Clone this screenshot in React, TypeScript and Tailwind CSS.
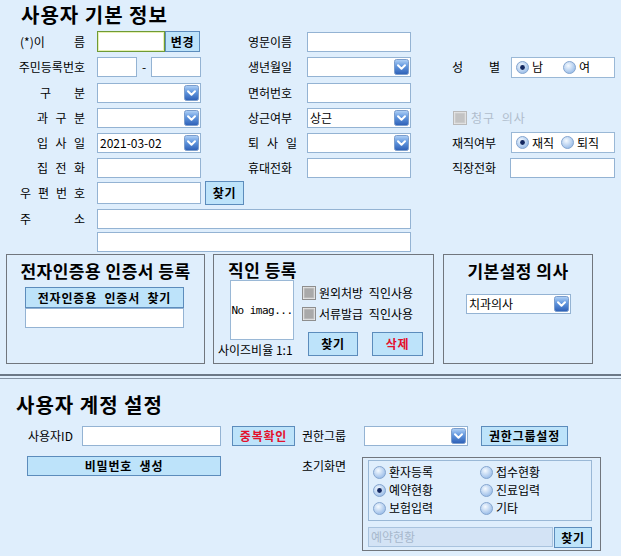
import React from 'react';

function DropIcon() {
  return (
    <svg width="15" height="16" viewBox="0 0 15 16" className="shrink-0">
      <defs>
        <linearGradient id="dropGrad" x1="0" y1="0" x2="0" y2="1">
          <stop offset="0" stopColor="#b3d3f7" />
          <stop offset="0.45" stopColor="#6196de" />
          <stop offset="1" stopColor="#2d5fb6" />
        </linearGradient>
      </defs>
      <rect x="0.5" y="0.5" width="14" height="15" rx="2" fill="url(#dropGrad)" stroke="#7b9dcc" />
      <path d="M4 6.2 L7.5 9.8 L11 6.2" fill="none" stroke="#fff" strokeWidth="2" strokeLinecap="round" strokeLinejoin="round" />
    </svg>
  );
}

function Radio({ checked }: { checked?: boolean }) {
  return (
    <svg width="13" height="13" viewBox="0 0 13 13" className="shrink-0">
      <defs>
        <radialGradient id="radioGrad" cx="0.4" cy="0.35" r="0.75">
          <stop offset="0" stopColor="#f5faff" />
          <stop offset="1" stopColor="#8db4e5" />
        </radialGradient>
      </defs>
      <circle cx="6.5" cy="6.5" r="6" fill="url(#radioGrad)" stroke="#86a6cf" />
      {checked && <circle cx="6.5" cy="6.5" r="2.4" fill="#13275f" />}
    </svg>
  );
}

function Check({ disabled }: { disabled?: boolean }) {
  return (
    <svg width="14" height="14" viewBox="0 0 14 14" className="shrink-0">
      <rect x="0.5" y="0.5" width="13" height="13" fill={disabled ? '#eeeeee' : '#f4f4f4'} stroke={disabled ? '#b9b9b9' : '#8e8e8e'} />
      <rect x="2" y="2" width="10" height="10" fill={disabled ? '#c3c3c3' : '#a9a9a9'} stroke={disabled ? '#d2d2d2' : '#c6c6c6'} strokeWidth="1" />
    </svg>
  );
}

function Input({ className = 'w-[104px]', value, disabled }: { className?: string; value?: string; disabled?: boolean }) {
  return (
    <div
      className={`h-[20px] border flex items-center pl-[2px] text-[12px] leading-none ${
        disabled ? 'border-[#a9c3de] bg-[#d3e3f5] text-[#a7b8cc]' : 'border-[#94b3d3] bg-white'
      } ${className}`}
    >
      {value}
    </div>
  );
}

function Select({ className = 'w-[104px]', value }: { className?: string; value?: string }) {
  return (
    <div className={`h-[20px] border border-[#94b3d3] bg-white flex items-center justify-between pl-[2px] pr-[1px] text-[12px] leading-none ${className}`}>
      <span>{value}</span>
      <DropIcon />
    </div>
  );
}

function Btn({ children, className = '', red }: { children: React.ReactNode; className?: string; red?: boolean }) {
  return (
    <div
      className={`border border-[#5c8cbc] bg-[#bde3fa] flex items-center justify-center text-[12px] font-bold leading-none tracking-[0.8px] [word-spacing:4px] whitespace-nowrap ${
        red ? 'text-[#e4102c]' : 'text-black'
      } ${className}`}
    >
      {children}
    </div>
  );
}

function Label({ parts, w }: { parts: string[]; w?: number }) {
  return (
    <div className="flex justify-between text-[12px] leading-none whitespace-nowrap" style={w ? { width: w } : undefined}>
      {parts.map((p, i) => (
        <span key={i}>{p}</span>
      ))}
    </div>
  );
}

function Row({ h, children }: { h: string; children: React.ReactNode }) {
  return <div className={`grid grid-cols-[97px_151px_59px_145px_59px_110px] items-center ${h}`}>{children}</div>;
}

function LeftLabel({ parts, w }: { parts: string[]; w?: number }) {
  return (
    <div className="flex justify-end pr-[12px]">
      <Label parts={parts} w={w} />
    </div>
  );
}

function RadioBox({ items }: { items: { label: string; checked?: boolean; gap: string }[] }) {
  return (
    <div className="h-[21px] w-[104px] border border-[#9ab8d6] bg-white flex items-center pl-[4px] text-[12px] leading-none">
      {items.map((it, i) => (
        <div key={i} className={`flex items-center gap-[3px] ${it.gap}`}>
          <Radio checked={it.checked} />
          <span>{it.label}</span>
        </div>
      ))}
    </div>
  );
}

export default function App() {
  return (
    <div className="w-[621px] h-[556px] overflow-hidden bg-[#dfeefc] text-black [word-spacing:3px] font-['Noto_Sans_CJK_KR','Liberation_Sans',sans-serif]">
      {/* 사용자 기본 정보 */}
      <div className="h-[29px] pt-[1px] pl-[21px] text-[20px] font-bold leading-[28px] tracking-[1px] [word-spacing:0px]">사용자 기본 정보</div>

      <Row h="h-[25px]">
        <LeftLabel parts={['(*)이', '름']} w={65} />
        <div className="flex">
          <div className="h-[21px] w-[68px] border border-[#6f9a35] bg-white shadow-[inset_0_0_0_1px_#e8f1b4]" />
          <Btn className="h-[21px] w-[35px]">변경</Btn>
        </div>
        <Label parts={['영문이름']} />
        <Input />
        <div />
        <div />
      </Row>

      <Row h="h-[26px]">
        <LeftLabel parts={['주민등록번호']} />
        <div className="flex items-center">
          <Input className="w-[40px]" />
          <span className="w-[14px] text-center text-[12px] leading-none">-</span>
          <Input className="w-[50px]" />
        </div>
        <Label parts={['생년월일']} />
        <Select />
        <Label parts={['성', '별']} w={48} />
        <RadioBox items={[{ label: '남', checked: true, gap: 'w-[47px]' }, { label: '여', gap: '' }]} />
      </Row>

      <Row h="h-[26px]">
        <LeftLabel parts={['구', '분']} w={45} />
        <Select />
        <Label parts={['면허번호']} />
        <Input />
        <div />
        <div />
      </Row>

      <Row h="h-[24px]">
        <LeftLabel parts={['과', '구', '분']} w={48} />
        <Select />
        <Label parts={['상근여부']} />
        <Select value="상근" />
        <div className="col-span-2 flex items-center gap-[4px] text-[12px] leading-none text-[#b0bdcc] pl-[1px]">
          <Check disabled />
          <span className="tracking-[1px]">청구 의사</span>
        </div>
      </Row>

      <Row h="h-[25px]">
        <LeftLabel parts={['입', '사', '일']} w={48} />
        <Select value="2021-03-02" />
        <Label parts={['퇴', '사', '일']} w={49} />
        <Select />
        <Label parts={['재직여부']} />
        <RadioBox items={[{ label: '재직', checked: true, gap: 'w-[45px]' }, { label: '퇴직', gap: '' }]} />
      </Row>

      <Row h="h-[25px]">
        <LeftLabel parts={['집', '전', '화']} w={48} />
        <Input />
        <Label parts={['휴대전화']} />
        <Input />
        <Label parts={['직장전화']} />
        <Input className="w-[105px] -ml-[1px]" />
      </Row>

      <Row h="h-[26px]">
        <LeftLabel parts={['우', '편', '번', '호']} w={65} />
        <div className="flex items-center">
          <Input className="w-[104px] h-[22px]" />
          <Btn className="ml-[4px] w-[39px] h-[24px]">찾기</Btn>
        </div>
        <div />
        <div />
        <div />
        <div />
      </Row>

      <Row h="h-[25px]">
        <LeftLabel parts={['주', '소']} w={65} />
        <div className="col-span-3">
          <Input className="w-[314px]" />
        </div>
      </Row>

      <Row h="h-[22px]">
        <div />
        <div className="col-span-3">
          <Input className="w-[314px]" />
        </div>
      </Row>

      {/* group boxes */}
      <div className="flex h-[110px] mt-[1px]">
        <div className="ml-[6px] w-[199px] border border-[#71767d] flex flex-col">
          <div className="pt-[7px] text-center text-[17px] font-bold leading-[17px] tracking-[0.5px] [word-spacing:0px]">전자인증용 인증서 등록</div>
          <Btn className="ml-[18px] mt-[8px] w-[159px] h-[21px]">전자인증용 인증서 찾기</Btn>
          <Input className="ml-[18px] w-[159px] h-[19px]" />
        </div>

        <div className="ml-[8px] w-[221px] border border-[#71767d] flex flex-col">
          <div className="h-[25px] pt-[6px] pl-[14px] text-[17px] font-bold leading-[17px] tracking-[0.5px] [word-spacing:0px]">직인 등록</div>
          <div className="flex">
            <div className="flex flex-col w-[88px]">
              <div className="ml-[16px] w-[64px] h-[60px] border border-[#9ab8d6] bg-white flex items-center justify-center text-[11px] leading-none font-['DejaVu_Sans_Mono',monospace] tracking-[-0.5px] [word-spacing:0px]">
                No imag...
              </div>
              <div className="h-[20px] pl-[4px] flex items-center text-[12px] leading-none whitespace-nowrap [word-spacing:0px]">사이즈비율 1:1</div>
            </div>
            <div className="flex flex-col pt-[3px]">
              <div className="h-[20px] flex items-center gap-[3px] text-[12px] leading-none whitespace-nowrap">
                <Check />
                <span>원외처방 직인사용</span>
              </div>
              <div className="mt-[1px] h-[20px] flex items-center gap-[3px] text-[12px] leading-none whitespace-nowrap">
                <Check />
                <span>서류발급 직인사용</span>
              </div>
              <div className="mt-[8px] flex">
                <Btn className="ml-[6px] w-[50px] h-[24px]">찾기</Btn>
                <Btn red className="ml-[14px] w-[51px] h-[24px]">삭제</Btn>
              </div>
            </div>
          </div>
        </div>

        <div className="ml-[9px] w-[150px] border border-[#71767d] flex flex-col">
          <div className="pt-[7px] text-center text-[17px] font-bold leading-[17px] tracking-[0.5px] [word-spacing:0px]">기본설정 의사</div>
          <Select value="치과의사" className="ml-[22px] mt-[15px] w-[105px]" />
        </div>
      </div>

      {/* separator */}
      <div className="mt-[10px] h-[2px] bg-[#6c7886]" />
      <div className="mt-[2px] h-[1px] bg-[#8593a3]" />

      {/* 사용자 계정 설정 */}
      <div className="h-[46px] pt-[12px] pl-[16px] text-[20px] font-bold leading-[28px] tracking-[1px] [word-spacing:0px]">사용자 계정 설정</div>

      <div className="flex items-center h-[22px]">
        <div className="w-[82px] pl-[28px] text-[12px] leading-none">사용자ID</div>
        <Input className="w-[139px]" />
        <Btn red className="ml-[11px] w-[63px] h-[20px]">중복확인</Btn>
        <div className="ml-[7px] w-[62px] text-[12px] leading-none">권한그룹</div>
        <Select className="w-[104px]" />
        <Btn className="ml-[13px] w-[87px] h-[20px]">권한그룹설정</Btn>
      </div>

      <div className="flex items-start mt-[9px]">
        <div className="w-[302px] pl-[27px]">
          <Btn className="w-[194px] h-[20px]">비밀번호 생성</Btn>
        </div>
        <div className="w-[60px] pt-[4px] text-[12px] leading-none">초기화면</div>
        <div className="mt-[1px] w-[239px] h-[94px] border border-[#71767d] flex flex-col">
          <div className="ml-[5px] mt-[2px] w-[224px] h-[61px] border border-[#9ab8d6] pt-[2px] pl-[4px] text-[12px] leading-none">
            {[
              ['환자등록', false, '접수현황', false],
              ['예약현황', true, '진료입력', false],
              ['보험입력', false, '기타', false],
            ].map(([a, ac, b, bc], i) => (
              <div key={i} className="flex h-[18px] items-center">
                <div className="w-[107px] flex items-center gap-[3px]">
                  <Radio checked={ac as boolean} />
                  <span>{a as string}</span>
                </div>
                <div className="flex items-center gap-[3px]">
                  <Radio checked={bc as boolean} />
                  <span>{b as string}</span>
                </div>
              </div>
            ))}
          </div>
          <div className="ml-[5px] mt-[6px] flex items-start">
            <Input disabled value="예약현황" className="w-[185px]" />
            <Btn className="ml-[1px] w-[38px] h-[21px]">찾기</Btn>
          </div>
        </div>
      </div>
    </div>
  );
}
